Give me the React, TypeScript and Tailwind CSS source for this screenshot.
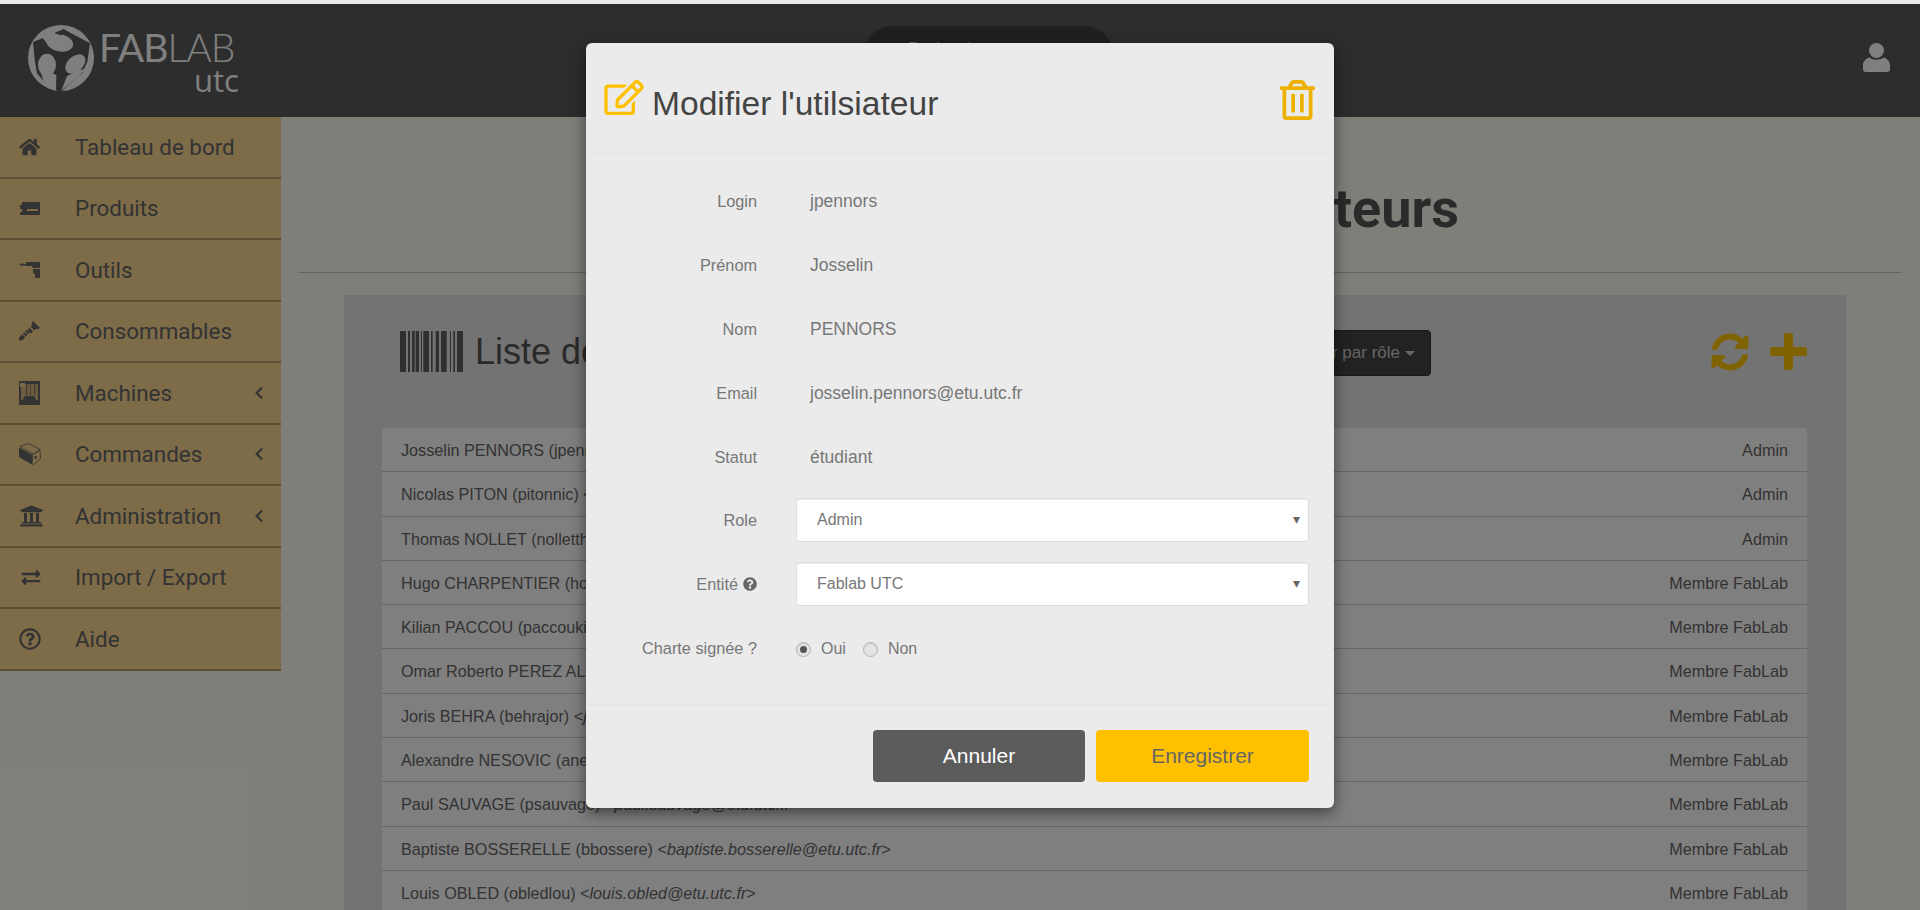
import { ReactNode } from "react";
import {
  FaChevronLeft,
  FaExchangeAlt,
  FaHome,
  FaQuestionCircle,
  FaRegEdit,
  FaRegQuestionCircle,
  FaRegTrashAlt,
  FaSyncAlt,
  FaUniversity,
} from "react-icons/fa";

const ProductIcon = () => (
  <svg viewBox="0 0 21 15" className="h-[15px] w-[21px] fill-current">
    <path d="M3 1h18v13H1v-3h2V8H1V4h2z" />
    <rect x="8" y="8" width="11" height="2" fill="#fcd892" />
  </svg>
);

const DrillIcon = () => (
  <svg viewBox="0 0 21 17" className="h-[17px] w-[21px] fill-current">
    <path d="M0 3.500 4 2v1h3V1h14v6h-7.500L13 5H7V4.500H4V5z" />
    <path d="M14 8h7v9h-5v-4l-2-1z" />
  </svg>
);

const ScrewIcon = () => (
  <svg viewBox="0 0 21 21" className="h-[21px] w-[21px] fill-current">
    <path d="M14 0l7 7-2.500 1.500-1-1-2 2-4-4 2-2-1-1z" />
    <path d="M10 6.500l4 4-2 2-3-3zM7.800 8.700l3 3-1.600 1.600-3-3zM5.500 11l3 3-1.600 1.600-3-3zM3.200 13.300l3 3L3 19.500H0v-3z" />
  </svg>
);

const PrinterIcon = () => (
  <svg viewBox="0 0 21 24" className="h-[24px] w-[21px]">
    <rect width="21" height="24" rx="1" className="fill-current" />
    <rect x="2" y="3" width="17" height="16" fill="#d8bb80" />
    <rect x="1" y="2" width="5" height="4" fill="#fcd892" />
    <path d="M7 3h1.500v11H7zM11 3h1v11h-1zM15 3h1.500v11H15z" className="fill-current" opacity=".7" />
    <path d="M6 15h9l3 5H3z" className="fill-current" />
  </svg>
);

const BoxIcon = () => (
  <svg viewBox="0 0 22 23" className="h-[23px] w-[22px]">
    <path d="M0 4.500l14 7.500-.5 10L0 14z" className="fill-current" />
    <path
      d="M1 3.500L9 .5l12 6-6.500 4.500zM14.500 11.500L21 7l.5 8.500-7.500 7"
      fill="none"
      stroke="currentColor"
      strokeWidth=".8"
    />
    <rect x="15.500" y="13" width="2" height="3" className="fill-current" />
  </svg>
);

const UserIcon = () => (
  <svg viewBox="0 0 27 29" className="h-[29px] w-[27px] fill-white">
    <circle cx="13.500" cy="7.500" r="7.500" />
    <path d="M6.500 14.500c3 3 11 3 14 0 4 1 6.500 4 6.500 8V26c0 2-1 3-3 3H3c-2 0-3-1-3-3v-3.500c0-4 2.500-7 6.500-8z" />
  </svg>
);

const BarcodeIcon = () => {
  const bars = [
    [15, 18],
    [39, 6],
    [51, 8],
    [62, 10],
    [78, 3],
    [85, 17],
    [108, 5],
    [122, 10],
    [138, 17],
    [165, 3],
    [175, 5],
    [186, 18],
  ];
  return (
    <svg viewBox="15 18 189 123" className="h-[41px] w-[63px] shrink-0 fill-[#5e5e5e]">
      {bars.map(([x, w]) => (
        <rect key={x} x={x} y="18" width={w} height="123" />
      ))}
    </svg>
  );
};

const FablabMark = () => (
  <svg viewBox="18 15 198 198" className="h-[66px] w-[66px] shrink-0">
    <circle cx="117" cy="114" r="99" fill="#ffffff" />
    <path
      d="M33 66 L98 40 L125 28 L204 70 L196 125 L180 160 L120 213 L108 213 L70 190 L45 160 L38 120 Z"
      fill="#5a5a5a"
    />
    <ellipse cx="113" cy="68" rx="41" ry="26" transform="rotate(12 113 68)" fill="#ffffff" />
    <path d="M60 52 L98 38 L110 50 L75 70 Z" fill="#ffffff" />
    <path d="M98 38 L125 28 L138 36 L115 46 Z" fill="#5a5a5a" />
    <ellipse cx="75" cy="135" rx="27" ry="34" fill="#ffffff" />
    <path d="M55 150 L66 192 L102 210 L103 165 L92 160 Z" fill="#ffffff" />
    <ellipse cx="160" cy="132" rx="23" ry="35" transform="rotate(48 160 132)" fill="#ffffff" />
    <path d="M118 212 L135 168 L175 150 L188 146 L172 168 Z" fill="#ffffff" />
  </svg>
);

const PlusIcon = () => (
  <svg viewBox="0 0 37 37" className="h-[37px] w-[37px] fill-current">
    <rect x="14" width="9" height="37" rx="2" />
    <rect y="14" width="37" height="9" rx="2" />
  </svg>
);

const menu: { label: string; icon: ReactNode; sub?: boolean }[] = [
  { label: "Tableau de bord", icon: <FaHome className="h-[20px] w-[21px]" /> },
  { label: "Produits", icon: <ProductIcon /> },
  { label: "Outils", icon: <DrillIcon /> },
  { label: "Consommables", icon: <ScrewIcon /> },
  { label: "Machines", icon: <PrinterIcon />, sub: true },
  { label: "Commandes", icon: <BoxIcon />, sub: true },
  { label: "Administration", icon: <FaUniversity className="h-[24px] w-[25px]" />, sub: true },
  { label: "Import / Export", icon: <FaExchangeAlt className="h-[19px] w-[24px]" /> },
  { label: "Aide", icon: <FaRegQuestionCircle className="h-[22px] w-[22px]" /> },
];

const users = [
  ["Josselin PENNORS (jpennors)", "josselin.pennors@etu.utc.fr", "Admin"],
  ["Nicolas PITON (pitonnic)", "nicolas.piton@etu.utc.fr", "Admin"],
  ["Thomas NOLLET (nollettho)", "thomas.nollet@etu.utc.fr", "Admin"],
  ["Hugo CHARPENTIER (hocharpe)", "hugo.charpentier@etu.utc.fr", "Membre FabLab"],
  ["Kilian PACCOU (paccouki)", "kilian.paccou@etu.utc.fr", "Membre FabLab"],
  ["Omar Roberto PEREZ ALBA (perezalb)", "omar.perez@etu.utc.fr", "Membre FabLab"],
  ["Joris BEHRA (behrajor)", "joris.behra@etu.utc.fr", "Membre FabLab"],
  ["Alexandre NESOVIC (anesovic)", "alexandre.nesovic@etu.utc.fr", "Membre FabLab"],
  ["Paul SAUVAGE (psauvage)", "paul.sauvage@etu.utc.fr", "Membre FabLab"],
  ["Baptiste BOSSERELLE (bbossere)", "baptiste.bosserelle@etu.utc.fr", "Membre FabLab"],
  ["Louis OBLED (obledlou)", "louis.obled@etu.utc.fr", "Membre FabLab"],
];

const fields = [
  ["Login", "jpennors"],
  ["Prénom", "Josselin"],
  ["Nom", "PENNORS"],
  ["Email", "josselin.pennors@etu.utc.fr"],
  ["Statut", "étudiant"],
];

const FormRow = ({ label, children }: { label: ReactNode; children: ReactNode }) => (
  <div className="flex h-[44px] items-center">
    <div className="flex w-[132px] shrink-0 items-center justify-end gap-[5px] text-[16.300px]">{label}</div>
    <div className="ml-[39px] flex-1">{children}</div>
  </div>
);

const Select = ({ options }: { options: string[] }) => (
  <div className="relative">
    <select
      defaultValue={options[0]}
      className="h-[44px] w-[513px] appearance-none rounded-[4px] border border-[#dedede] bg-white pl-[20px] text-[16px] text-[#777] shadow-[inset_0_1px_1px_rgba(0,0,0,0.08)]"
    >
      {options.map((o) => (
        <option key={o}>{o}</option>
      ))}
    </select>
    <span className="absolute right-[9px] top-[11px] text-[14px] text-[#666]">▾</span>
  </div>
);

const Radio = ({ checked }: { checked?: boolean }) => (
  <span className="flex h-[15px] w-[15px] items-center justify-center rounded-full border border-[#b5b5b5] bg-[#e4e4e4] shadow-[inset_0_1px_1px_rgba(0,0,0,0.1)]">
    {checked && <span className="h-[7px] w-[7px] rounded-full bg-[#555]" />}
  </span>
);

export default function App() {
  return (
    <div className="h-[910px] w-[1920px] overflow-hidden bg-[#e8eaed] pt-[4px] font-['Liberation_Sans',sans-serif]">
      <div className="relative h-[906px] bg-[#fffff4]">
        <header className="flex h-[113px] items-center justify-between bg-[#5a5a5a] text-white">
          <div className="ml-[28px] flex items-start gap-[5px]">
            <FablabMark />
            <div className="flex w-[142px] flex-col items-start">
              <div className="mt-[1px] h-[43px] text-[39px] leading-[43px] tracking-[-1px] font-['Lato',sans-serif]">
                <span>FAB</span>
                <span className="font-light">LAB</span>
              </div>
              <div className="ml-[95px] mt-[-5px] text-[31px] leading-[32px] font-['Open_Sans',sans-serif]">utc</div>
            </div>
          </div>
          <div className="mr-[30px] mt-[-6px]">
            <UserIcon />
          </div>
          <div className="absolute left-[864px] top-[22px] h-[60px] w-[249px] rounded-[28px] bg-[#404040] pl-[44px] pt-[11px] text-[16px] text-[#bbb]">
            Recherche
          </div>
        </header>

        <div className="flex items-start">
          <aside className="w-[281px] shrink-0 bg-[#fcd892] font-['Roboto',sans-serif] text-[#666]">
            {menu.map((item) => (
              <div key={item.label} className="flex h-[61.500px] items-center border-b-2 border-[#b89e6a] pl-[19px]">
                <span className="flex w-[56px] shrink-0 items-center">{item.icon}</span>
                <span className="flex-1 pt-[2px] text-[22.400px]">{item.label}</span>
                {item.sub && <FaChevronLeft className="mr-[17px] h-[14px] w-[10px]" />}
              </div>
            ))}
          </aside>

          <main className="min-w-0 flex-1">
            <div className="ml-[18px] mr-[19px] flex h-[156px] items-center justify-end border-b border-[#c4c4be] pr-[442px] pt-[27px] font-['Roboto',sans-serif] text-[54px] font-bold text-[#555]">
              Gestion des utilisateurs
            </div>

            <section className="ml-[63px] mt-[22px] w-[1502px] bg-[#e6e6e6] pl-[38px] pr-[39px] pt-[36px]">
              <div className="flex h-[97px] items-start">
                <span className="ml-[18px]">
                  <BarcodeIcon />
                </span>
                <h2 className="ml-[12px] text-[36px] leading-[41px] text-[#555]">Liste des utilisateurs</h2>
                <div className="ml-auto flex">
                  <button className="mt-[-1px] flex h-[46px] items-center gap-[5px] rounded-[4px] border border-[#333] bg-[#444] pl-[16px] pr-[15px] text-[17px] text-[#ccc]">
                    Filtrer par rôle
                    <span className="h-0 w-0 border-x-[5px] border-t-[5px] border-x-transparent border-t-[#ccc]" />
                  </button>
                  <div className="ml-[280px] mt-[2px] flex gap-[21px] text-[#ffc600]">
                    <FaSyncAlt className="h-[38px] w-[38px]" />
                    <PlusIcon />
                  </div>
                </div>
              </div>

              <ul className="rounded-t-[4px] bg-white text-[16.200px] text-[#666]">
                {users.map(([name, email, role]) => (
                  <li key={name} className="flex h-[44.300px] items-center justify-between border-b border-[#ccc] pl-[19px] pr-[19px] pt-[1px]">
                    <span>
                      {name} &lt;<em>{email}</em>&gt;
                    </span>
                    <span>{role}</span>
                  </li>
                ))}
              </ul>
            </section>
          </main>
        </div>

        <div className="absolute inset-0 bg-black/50" />

        <div className="absolute left-[586px] top-[39px] w-[748px] rounded-[6px] bg-[#ebebeb] shadow-[0_5px_15px_rgba(0,0,0,0.5)]">
          <div className="flex h-[111px] items-center justify-between border-b border-[#e5e5e5] pl-[18px] pr-[19px]">
            <div className="flex items-center gap-[8px]">
              <FaRegEdit className="h-[35px] w-[40px] text-[#ffc000]" />
              <h1 className="mt-[12px] text-[33.600px] text-[#444]">Modifier l'utilsiateur</h1>
            </div>
            <FaRegTrashAlt className="mt-[3px] h-[40px] w-[35px] text-[#edb200]" />
          </div>

          <div className="flex flex-col gap-[20px] px-[39px] pb-[34px] pt-[24px] text-[#777]">
            {fields.map(([label, value]) => (
              <div key={label} className="h-[44px] pt-[1px]">
                <FormRow label={label}>
                  <span className="ml-[14px] block text-[17.500px]">{value}</span>
                </FormRow>
              </div>
            ))}
            <FormRow label="Role">
              <Select options={["Admin"]} />
            </FormRow>
            <FormRow
              label={
                <>
                  Entité <FaQuestionCircle className="h-[14px] w-[14px] text-[#666]" />
                </>
              }
            >
              <Select options={["Fablab UTC"]} />
            </FormRow>
            <FormRow label="Charte signée ?">
              <div className="flex items-center pt-[2px] text-[16px]">
                <Radio checked />
                <span className="ml-[10px]">Oui</span>
                <span className="ml-[17px]">
                  <Radio />
                </span>
                <span className="ml-[10px]">Non</span>
              </div>
            </FormRow>
          </div>

          <div className="flex justify-end gap-[11px] border-t border-[#e5e5e5] pb-[26px] pr-[25px] pt-[25px] text-[21px]">
            <button className="h-[52px] w-[212px] rounded-[4px] bg-[#5b5b5b] text-white">Annuler</button>
            <button className="h-[52px] w-[213px] rounded-[4px] bg-[#ffc000] text-[#666]">Enregistrer</button>
          </div>
        </div>
      </div>
    </div>
  );
}
